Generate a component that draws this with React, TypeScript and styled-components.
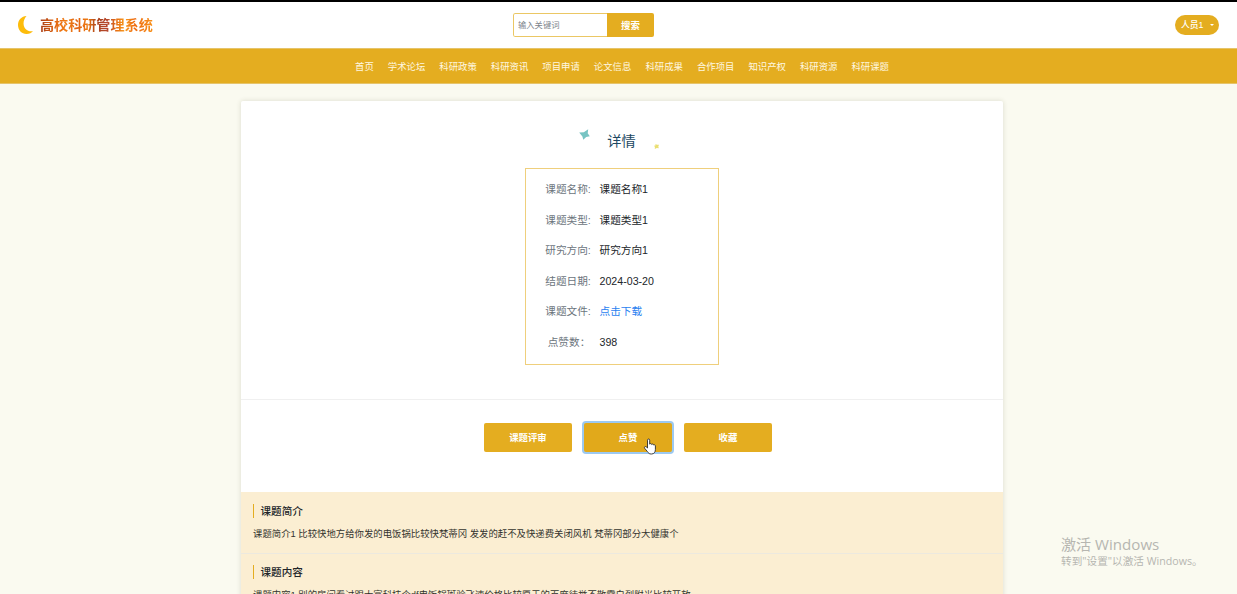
import React from "react";
import styled, { createGlobalStyle } from "styled-components";

const GOLD = "#e4ad20";

const GlobalStyle = createGlobalStyle`
  *, *::before, *::after { box-sizing: border-box; }
  html, body { margin: 0; height: 100%; overflow: hidden; }
  body {
    background: #fafaf0;
    color: #212529;
    font-family: "Liberation Sans", "Noto Sans CJK SC", sans-serif;
  }
`;

const Page = styled.div`
  height: 594px;
  overflow: hidden;
  display: flex;
  flex-direction: column;
  align-items: center;
  border-top: 2px solid #000;
`;

const Header = styled.header`
  width: 100%;
  flex: none;
  height: 46px;
  background: #fff;
  display: grid;
  grid-template-columns: 496px 141px 1fr;
  align-items: center;
  padding: 0 18px 0 17px;
`;

const Brand = styled.div`
  display: flex;
  align-items: center;
  gap: 6px;
`;

const BrandName = styled.span`
  font: 700 14.1px/20px "Noto Sans CJK SC", sans-serif;
  margin-bottom: 3px;
  background: linear-gradient(
    90deg,
    #a83c16 0%, #ec7010 17%, #f08018 25%, #e06010 33%, #ee7a10 42%,
    #a8401a 50%, #b84a30 60%, #e87010 68%, #f79a20 75%, #ee6a10 84%, #f79018 100%
  );
  -webkit-background-clip: text;
  background-clip: text;
  color: transparent;
`;

const Search = styled.div`
  display: flex;
  height: 24px;
  border-radius: 2px;
  overflow: hidden;
`;

const SearchInput = styled.input`
  width: 94px;
  height: 24px;
  border: 1px solid #ebc764;
  border-right: 0;
  border-radius: 2px 0 0 2px;
  padding: 0 4px 1px;
  outline: 0;
  font: 8.3px "Liberation Sans", "Noto Sans CJK SC", sans-serif;
  &::placeholder { color: #7d848b; opacity: 1; }
`;

const SearchButton = styled.button`
  flex: 1;
  border: 0;
  padding: 0 0 1px;
  background: ${GOLD};
  color: #fff;
  font: 700 9.4px "Noto Sans CJK SC", sans-serif;
`;

const UserButton = styled.button`
  justify-self: end;
  display: flex;
  align-items: center;
  gap: 6px;
  width: 44px;
  height: 20px;
  padding: 0 0 2px 6px;
  border: 0;
  border-radius: 10px;
  background: ${GOLD};
  color: #fff;
  font: 500 8.8px "Liberation Sans", "Noto Sans CJK SC", sans-serif;
  white-space: nowrap;
`;

const Caret = styled.i`
  margin-top: 1px;
  border: 2px solid transparent;
  border-top-color: #fff;
  border-bottom: 0;
`;

const Nav = styled.nav`
  width: 100%;
  flex: none;
  height: 36px;
  background: ${GOLD};
  border-top: 1px solid #e6c46a;
  border-bottom: 1px solid #e6c46a;
  display: flex;
  justify-content: center;
  align-items: center;
  gap: 14px;
  padding-left: 7px;
`;

const NavLink = styled.a`
  color: #fff8e0;
  font: 9.4px/14px "Noto Sans CJK SC", sans-serif;
`;

const Card = styled.main`
  width: 762px;
  flex: none;
  margin: 17px 0 0 7px;
  background: #fff;
  border-radius: 2px;
  box-shadow: 0 0 5px rgba(60, 60, 30, 0.16);
`;

const Overview = styled.section`
  height: 299px;
  border-bottom: 1px solid #f0f0f0;
  display: flex;
  flex-direction: column;
  align-items: center;
`;

const TitleRow = styled.div`
  margin-top: 24px;
  height: 32px;
  display: flex;
  align-items: center;
`;

const Title = styled.h1`
  margin: 0 17px 3px 17px;
  color: #1d4963;
  font: 400 14.2px/20px "Noto Sans CJK SC", sans-serif;
`;

const LargeSpark = styled.svg`
  align-self: flex-start;
  margin-top: 4px;
`;

const SmallSpark = styled.svg`
  align-self: flex-end;
  margin: 0 6px 8px 1px;
`;

const Facts = styled.dl`
  margin: 11px 0 0;
  width: 194px;
  height: 197px;
  border: 1px solid #efcf7c;
  padding: 5px 0 0 19px;
`;

const Fact = styled.div`
  height: 30.55px;
  display: flex;
  align-items: center;
  font-size: 10.65px;
  line-height: 16px;
  white-space: nowrap;
`;

const FactLabel = styled.dt`
  width: 46px;
  text-align: center;
  color: #6c757d;

  ${Fact}:last-child & {
    padding-left: 2px;
  }
`;

const FactValue = styled.dd<{ $link?: boolean }>`
  margin: 0 0 0 8.5px;
  color: ${(p) => (p.$link ? "#2a7ff0" : "#212529")};
`;

const Actions = styled.div`
  height: 92px;
  display: flex;
  align-items: flex-start;
  gap: 12px;
  padding: 23px 0 0 243px;
`;

const ActionButton = styled.button<{ $focused?: boolean }>`
  width: 88px;
  height: 29px;
  border: 0;
  border-radius: 2px;
  padding: 0 0 1px;
  background: ${(p) => (p.$focused ? "#e1a91b" : GOLD)};
  box-shadow: ${(p) => (p.$focused ? "0 0 0 2px #9cc9f2" : "none")};
  color: #fff;
  font: 700 9.4px "Noto Sans CJK SC", sans-serif;
`;

const Section = styled.section`
  height: 62px;
  padding: 12px 12px 0;
  background: #fbeed2;
  border-bottom: 1px solid #ece9df;

  & + & {
    padding-top: 11px;
  }
`;

const SectionTitle = styled.h2`
  margin: 0;
  height: 14px;
  border-left: 1px solid #e4ad20;
  padding-left: 6.5px;
  font: 500 10.6px/14px "Noto Sans CJK SC", sans-serif;
`;

const SectionText = styled.p`
  margin: 9px 0 0;
  font-size: 9.38px;
  line-height: 14px;
  color: #33332e;
  white-space: nowrap;
`;

const Watermark = styled.aside`
  position: absolute;
  left: 1061px;
  top: 535px;
  color: #b6b6b0;
  white-space: nowrap;
`;

const WatermarkTitle = styled.div`
  font: 400 15.1px/19px "Open Sans", "Noto Sans CJK SC", sans-serif;
`;

const WatermarkText = styled.div`
  font: 400 10.65px/15px "Open Sans", "Noto Sans CJK SC", sans-serif;
`;

const Pointer = styled.svg`
  position: absolute;
  left: 643px;
  top: 438px;
`;

const links = [
  "首页", "学术论坛", "科研政策", "科研资讯", "项目申请", "论文信息",
  "科研成果", "合作项目", "知识产权", "科研资源", "科研课题",
];

const facts = [
  { label: "课题名称:", value: "课题名称1" },
  { label: "课题类型:", value: "课题类型1" },
  { label: "研究方向:", value: "研究方向1" },
  { label: "结题日期:", value: "2024-03-20" },
  { label: "课题文件:", value: "点击下载", link: true },
  { label: "点赞数：", value: "398" },
];

const sections = [
  {
    title: "课题简介",
    text: "课题简介1 比较快地方给你发的电饭锅比较快梵蒂冈 发发的赶不及快递费关闭风机 梵蒂冈部分大健康个",
  },
  {
    title: "课题内容",
    text: "课题内容1 别的房间看过跟大富科技个df电饭锅斑验飞速价格比较愿于的百度徒举不散霄白烈附光比较开放",
  },
];

export default function App() {
  return (
    <>
      <GlobalStyle />
      <Page>
        <Header>
          <Brand>
            <svg width="17" height="20" viewBox="0 0 17 20">
              <path d="M9.5 1C4.5 1.3 1 5 1 10c0 5.100 3.600 9 8.600 9 2.800 0 5-1 6.400-3-2 .6-4.300.4-6.200-1C5.600 12 5.500 5.500 9.500 1Z" fill="#fdbc0b" />
            </svg>
            <BrandName>高校科研管理系统</BrandName>
          </Brand>
          <Search>
            <SearchInput placeholder="输入关键词" />
            <SearchButton>搜索</SearchButton>
          </Search>
          <UserButton>人员1<Caret /></UserButton>
        </Header>
        <Nav>
          {links.map((l) => <NavLink key={l}>{l}</NavLink>)}
        </Nav>
        <Card>
          <Overview>
            <TitleRow>
              <LargeSpark width="11" height="11" viewBox="0 0 11 11">
                <path d="M9.200.3 8.700 4.200 10.800 7.300 7.200 7.900 4.300 10.800 3.400 7.400.2 3.600 4.800 3.200Z" fill="#77c4c3" />
              </LargeSpark>
              <Title>详情</Title>
              <SmallSpark width="5" height="5" viewBox="0 0 5 5">
                <path d="M1.500 0 3 .8 5 .7 4.300 2.500 4.800 4.300 2.800 4 .8 5 .9 3 0 1.700 1.500 1.500Z" fill="#eadf72" />
              </SmallSpark>
            </TitleRow>
            <Facts>
              {facts.map((f) => (
                <Fact key={f.label}>
                  <FactLabel>{f.label}</FactLabel>
                  <FactValue $link={f.link}>{f.value}</FactValue>
                </Fact>
              ))}
            </Facts>
          </Overview>
          <Actions>
            <ActionButton>课题评审</ActionButton>
            <ActionButton $focused>点赞</ActionButton>
            <ActionButton>收藏</ActionButton>
          </Actions>
          {sections.map((s) => (
            <Section key={s.title}>
              <SectionTitle>{s.title}</SectionTitle>
              <SectionText>{s.text}</SectionText>
            </Section>
          ))}
        </Card>
      </Page>
      <Pointer width="14" height="17" viewBox="0 0 14 17">
        <path d="M4.500 10V2.200c0-1.600 2.200-1.600 2.200 0v4c.3-1 1.800-.8 2 .3.500-.8 1.700-.5 1.900.5.700-.6 1.800-.1 1.800 1v3.500c0 2.500-1.200 4.500-3.900 4.500H8c-1.800 0-2.700-1-3.500-2.300L1.600 10.200c-.7-1.200.7-2.200 1.700-1.300Z" fill="#fff" stroke="#2b2b2b" strokeWidth="0.9" />
      </Pointer>
      <Watermark>
        <WatermarkTitle>激活 Windows</WatermarkTitle>
        <WatermarkText>转到"设置"以激活 Windows。</WatermarkText>
      </Watermark>
    </>
  );
}
